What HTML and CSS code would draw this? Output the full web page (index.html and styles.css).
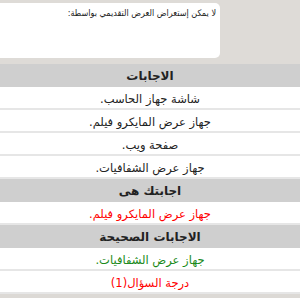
FILE: index.html
```html
<!DOCTYPE html>
<html lang="ar" dir="rtl">
<head>
<meta charset="utf-8">
<link rel="stylesheet" href="styles.css">
</head>
<body>
<div class="page">
  <div class="top">
    <div class="question">لا يمكن إستعراض العرض التقديمي بواسطة:</div>
  </div>
  <table class="answers">
    <tr class="head"><td>الاجابات</td></tr>
    <tr class="row"><td>شاشة جهاز الحاسب.</td></tr>
    <tr class="row"><td>جهاز عرض المايكرو فيلم.</td></tr>
    <tr class="row"><td>صفحة ويب.</td></tr>
    <tr class="row"><td>جهاز عرض الشفافيات.</td></tr>
    <tr class="head"><td>اجابتك هى</td></tr>
    <tr class="row"><td class="wrong">جهاز عرض المايكرو فيلم.</td></tr>
    <tr class="head"><td>الاجابات الصحيحة</td></tr>
    <tr class="row"><td class="right">جهاز عرض الشفافيات.</td></tr>
    <tr class="row"><td class="wrong">درجة السؤال(1)</td></tr>
  </table>
</div>
</body>
</html>
```
FILE: styles.css
```css
html, body {
  margin: 0;
  padding: 0;
  background: #dcd9d5;
}
body {
  font-family: "DejaVu Sans", Tahoma, sans-serif;
  font-size: 12px;
  color: #222;
}
.page {
  width: 300px;
  height: 298px;
  overflow: hidden;
}
.top {
  padding: 3px 80px 6px 0;
  background: #dedbd7;
}
.question {
  background: #fff;
  height: 55px;
  border-radius: 0 5px 5px 0;
  padding: 5px 4px 0 0;
  box-sizing: border-box;
  text-align: right;
  color: #222;
  font-family: "DejaVu Sans Condensed", "DejaVu Sans", sans-serif;
  font-size: 9px;
}
.answers {
  width: 100%;
  border-collapse: collapse;
}
.answers td {
  text-align: center;
  padding: 2px 0 0 0;
  height: 19px;
  background: #fff;
  border-bottom: 2px solid #e6e6e6;
}
.row td {
  font-size: 11.5px;
}
.head td {
  background: #cfcfcf;
  font-weight: bold;
  border-bottom: 2px solid #cfcfcf;
  color: #222;
}
.wrong { color: #f00; }
.right { color: #1a8a1a; }
```
